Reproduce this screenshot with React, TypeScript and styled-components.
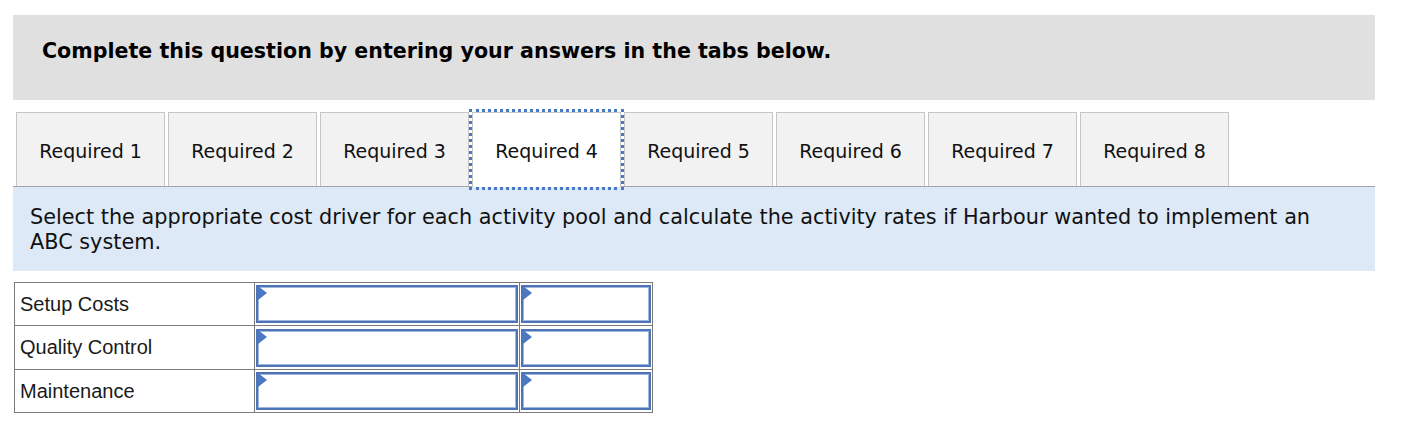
import React from 'react'
import styled, { createGlobalStyle } from 'styled-components'

const GlobalStyle = createGlobalStyle`
  body {
    margin: 0;
    background: #fff;
    font-family: "DejaVu Sans", Verdana, sans-serif;
    color: #000;
  }
`

const Page = styled.div`
  padding: 15px 51px 0 13px;
`

const Header = styled.div`
  background: #e0e0e0;
  height: 85px;
  box-sizing: border-box;
  padding: 25px 29px 0;
  font-size: 20.6px;
  line-height: 23px;
  font-weight: bold;
`

const TabBar = styled.div`
  display: flex;
  gap: 3px;
  margin-top: 12px;
  padding-left: 3px;
  border-bottom: 1px solid #a4a4a4;
`

const Tab = styled.div<{ $active?: boolean }>`
  width: 149px;
  box-sizing: border-box;
  display: flex;
  align-items: center;
  justify-content: center;
  padding-top: ${p => (p.$active ? '2px' : '3px')};
  font-size: 19px;
  color: #111;
  background: ${p => (p.$active ? '#fff' : '#f2f2f2')};
  border: 1px solid #c6c6c6;
  border-bottom: none;
  margin-bottom: ${p => (p.$active ? '-1px' : '0')};
  height: ${p => (p.$active ? '75px' : '74px')};
  outline: ${p => (p.$active ? '3px dotted #4a78c2' : 'none')};
`

const Instructions = styled.div`
  background: #dde9f6;
  padding: 18px 17px 16px;
  font-size: 20.8px;
  line-height: 25px;
  color: #111;
`

const Grid = styled.table`
  margin-top: 11px;
  margin-left: 1px;
  border-collapse: collapse;
  font-family: "Liberation Sans", Arial, sans-serif;
  font-size: 20px;
`

const Row = styled.tr<{ $h: number }>`
  height: ${p => p.$h}px;
`

const Label = styled.td`
  width: 240px;
  box-sizing: border-box;
  padding: 0 5px;
  border: 1px solid #7a7a7a;
  color: #1a1a1a;
`

const InputCell = styled.td<{ $w: number }>`
  width: ${p => p.$w}px;
  padding: 1px;
  border: 1px solid #7a7a7a;
`

const Field = styled.div`
  position: relative;
  box-sizing: border-box;
  height: 100%;
  min-height: 38px;
  background: #fff;
  border: 2px solid #4f74b5;
  box-shadow: inset 0 0 0 1px #9fb6de;
`

const Marker = styled.span`
  position: absolute;
  left: 0;
  top: -1px;
  width: 0;
  height: 0;
  border-top: 7px solid transparent;
  border-bottom: 7px solid transparent;
  border-left: 9px solid #4a78c2;
`

const tabs = [1, 2, 3, 4, 5, 6, 7, 8]
const rows = [
  { label: 'Setup Costs', h: 43 },
  { label: 'Quality Control', h: 44 },
  { label: 'Maintenance', h: 43 },
]

export default function App() {
  return (
    <>
      <GlobalStyle />
      <Page>
        <Header>Complete this question by entering your answers in the tabs below.</Header>
        <TabBar>
          {tabs.map(n => (
            <Tab key={n} $active={n === 4}>Required {n}</Tab>
          ))}
        </TabBar>
        <Instructions>
          Select the appropriate cost driver for each activity pool and calculate the activity rates if Harbour wanted to implement an ABC system.
        </Instructions>
        <Grid>
          <tbody>
            {rows.map(r => (
              <Row key={r.label} $h={r.h}>
                <Label>{r.label}</Label>
                <InputCell $w={262}>
                  <Field><Marker /></Field>
                </InputCell>
                <InputCell $w={130}>
                  <Field><Marker /></Field>
                </InputCell>
              </Row>
            ))}
          </tbody>
        </Grid>
      </Page>
    </>
  )
}
